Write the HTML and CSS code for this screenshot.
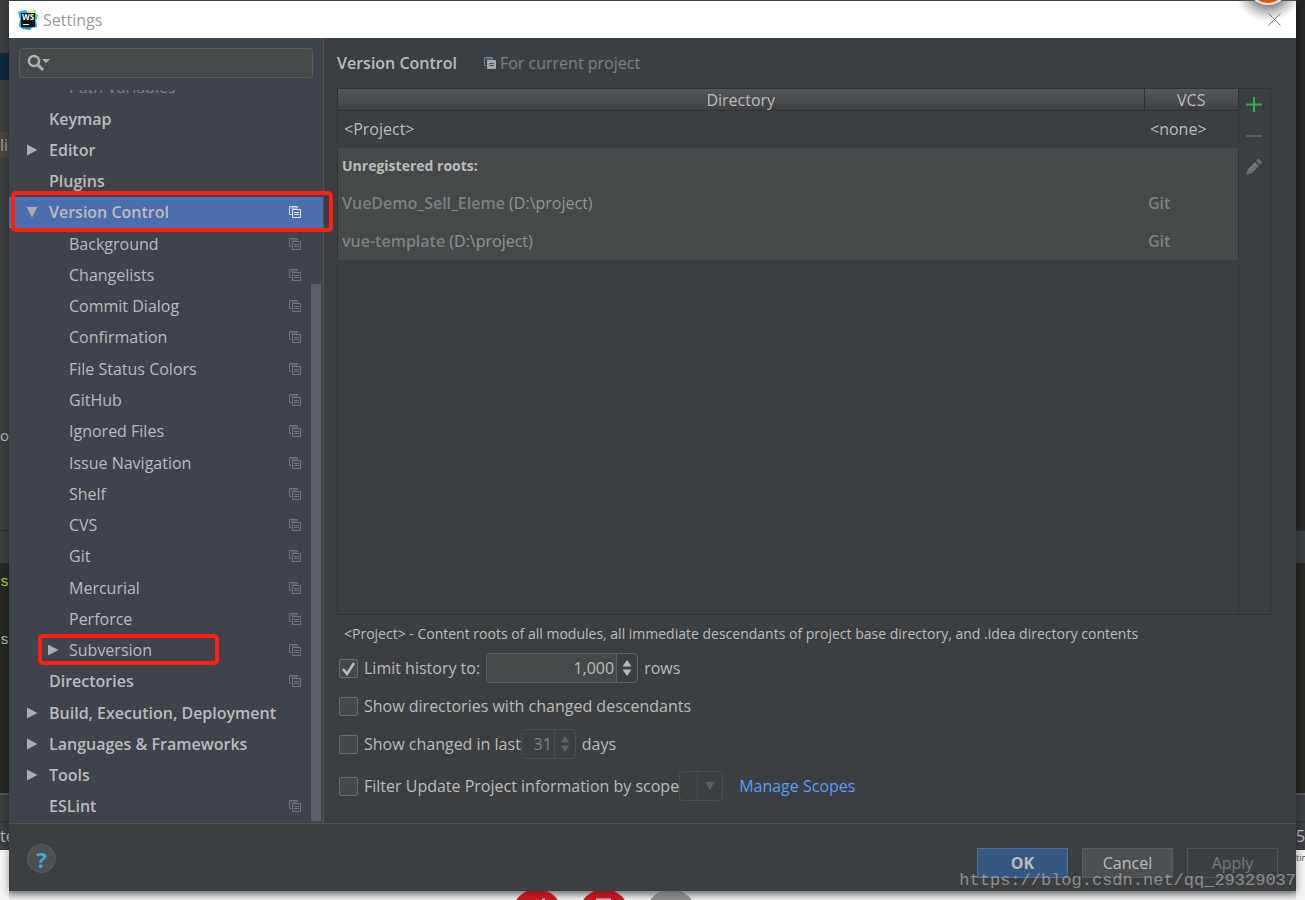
FILE: index.html
```html
<!DOCTYPE html>
<html lang="en">
<head>
<meta charset="utf-8">
<title>Settings</title>
<link rel="stylesheet" href="styles.css">
</head>
<body>
<svg class="defs" aria-hidden="true">
  <symbol id="copy" viewBox="0 0 12 12"><path d="M2.500 8.500H.5V.5h8V2M2 2h6" fill="none" stroke="var(--back)"/><path d="M3.500 3.500h8v8h-8z" fill="var(--front, none)" stroke="currentColor"/><path d="M5 6.500h5M5 8.500h5" fill="none" stroke="var(--lines, currentColor)"/></symbol>
  <symbol id="right" viewBox="0 0 12 12"><path d="M1 .5 11.500 6 1 11.500z" fill="currentColor"/></symbol>
  <symbol id="down" viewBox="0 0 12 12"><path d="M.5 1h11L6 11.500z" fill="currentColor"/></symbol>
  <symbol id="spin" viewBox="0 0 10 18"><path d="M5 1l4.500 6.500H.5zM.5 10.500h9L5 17z" fill="currentColor"/></symbol>
</svg>
<div class="desktop">
  <div class="strip left">
    <div class="s1"></div><div class="s2"></div><div class="s3"></div>
    <div class="s4">li</div>
    <div class="s5"><span>or</span></div>
    <div class="s6"></div>
    <div class="code"><span class="green">:s</span><span>s</span></div>
    <div class="s8"></div>
    <div class="status">te</div>
    <div class="page"></div>
  </div>
  <div class="dialog">
    <header class="titlebar">
      <svg class="logo" viewBox="0 0 20 20"><path d="M0 2 7 0l3 2 7-2 1 4 2 1-2 5 1 7-5 1-2 2-8-1-3-3L2 9z" fill="#12b5e6"/><path d="M9 2 16 0l2 4-7-1z" fill="#f3ec4c"/><path d="M2 12 4 18l8 1 2-2z" fill="#087fbc"/><path d="M15 5h4l-1 7-3 2z" fill="#21d7c4"/><path d="M3 3h14v14H3z" fill="#101010"/><path d="M5 14.500h6" stroke="#fff"/><text x="4" y="10">WS</text></svg>
      <h1>Settings</h1>
      <button class="close" aria-label="Close"><svg viewBox="0 0 13 13"><path d="M.5.5l12 12M12.500.5l-12 12" stroke="#777" fill="none"/></svg></button>
    </header>
    <div class="content">
      <aside class="sidebar">
        <label class="search">
          <svg viewBox="0 0 24 18"><circle cx="7" cy="7" r="5" fill="none" stroke="#afb1b3" stroke-width="2.500"/><path d="M11 11l5 5" stroke="#afb1b3" stroke-width="3"/><path d="M15 5h8l-4 4z" fill="#afb1b3"/></svg>
          <input type="text" aria-label="Search settings">
        </label>
        <div class="treewrap">
        <ul class="tree">
          <li class="cut sub">Path Variables</li>
          <li class="top">Keymap</li>
          <li class="top"><button aria-label="Expand"><svg><use href="#right"/></svg></button>Editor</li>
          <li class="top">Plugins</li>
          <li class="top selected"><button aria-label="Collapse"><svg><use href="#down"/></svg></button>Version Control<svg class="copy"><use href="#copy"/></svg><i class="mark wide"></i></li>
          <li class="sub">Background<svg class="copy"><use href="#copy"/></svg></li>
          <li class="sub">Changelists<svg class="copy"><use href="#copy"/></svg></li>
          <li class="sub">Commit Dialog<svg class="copy"><use href="#copy"/></svg></li>
          <li class="sub">Confirmation<svg class="copy"><use href="#copy"/></svg></li>
          <li class="sub">File Status Colors<svg class="copy"><use href="#copy"/></svg></li>
          <li class="sub">GitHub<svg class="copy"><use href="#copy"/></svg></li>
          <li class="sub">Ignored Files<svg class="copy"><use href="#copy"/></svg></li>
          <li class="sub">Issue Navigation<svg class="copy"><use href="#copy"/></svg></li>
          <li class="sub">Shelf<svg class="copy"><use href="#copy"/></svg></li>
          <li class="sub">CVS<svg class="copy"><use href="#copy"/></svg></li>
          <li class="sub">Git<svg class="copy"><use href="#copy"/></svg></li>
          <li class="sub">Mercurial<svg class="copy"><use href="#copy"/></svg></li>
          <li class="sub">Perforce<svg class="copy"><use href="#copy"/></svg></li>
          <li class="sub"><button aria-label="Expand"><svg><use href="#right"/></svg></button>Subversion<svg class="copy"><use href="#copy"/></svg><i class="mark narrow"></i></li>
          <li class="top">Directories<svg class="copy"><use href="#copy"/></svg></li>
          <li class="top"><button aria-label="Expand"><svg><use href="#right"/></svg></button>Build, Execution, Deployment</li>
          <li class="top"><button aria-label="Expand"><svg><use href="#right"/></svg></button>Languages &amp; Frameworks</li>
          <li class="top"><button aria-label="Expand"><svg><use href="#right"/></svg></button>Tools</li>
          <li class="top">ESLint<svg class="copy"><use href="#copy"/></svg></li>
        </ul>
        <div class="scrollbar"></div>
        </div>
      </aside>
      <main>
        <div class="heading"><h2>Version Control</h2><svg class="copy"><use href="#copy"/></svg><span>For current project</span></div>
        <div class="panel">
          <div class="tablebox">
            <table>
              <colgroup><col><col class="vcs"></colgroup>
              <thead><tr><th>Directory</th><th>VCS</th></tr></thead>
              <tbody>
                <tr class="project"><td>&lt;Project&gt;</td><td>&lt;none&gt;</td></tr>
                <tr class="root label"><td colspan="2">Unregistered roots:</td></tr>
                <tr class="root"><td><b>VueDemo_Sell_Eleme</b> (D:\project)</td><td><b>Git</b></td></tr>
                <tr class="root"><td><b>vue-template</b> (D:\project)</td><td><b>Git</b></td></tr>
              </tbody>
            </table>
          </div>
          <div class="tools">
            <button aria-label="Add"><svg viewBox="0 0 16 16"><path d="M8 0v15M0 7.500h16" stroke="#2fae52" stroke-width="2"/></svg></button>
            <button aria-label="Remove" disabled><svg viewBox="0 0 16 16"><path d="M0 8h16" stroke="#5b5d5f" stroke-width="2"/></svg></button>
            <button aria-label="Edit" disabled><svg viewBox="0 0 16 16"><path d="M0 16 2 10 9 3l4 4-7 7z" fill="#6b6d6f"/><path d="M10 2l2-2h1l3 3v1l-2 2z" fill="#66686a"/><path d="M3 11l7-7" stroke="#808284"/></svg></button>
          </div>
        </div>
        <p class="note">&lt;Project&gt; - Content roots of all modules, all immediate descendants of project base directory, and .idea directory contents</p>
        <div class="options">
          <div class="option"><input type="checkbox" id="limit" checked><label for="limit">Limit history to:</label><span class="spinner"><input type="text" value="1,000" aria-label="History rows"><button aria-label="Change rows"><svg><use href="#spin"/></svg></button></span><span>rows</span></div>
          <div class="option"><input type="checkbox" id="dirs"><label for="dirs">Show directories with changed descendants</label></div>
          <div class="option tight"><input type="checkbox" id="last"><label for="last">Show changed in last</label><span class="spinner small"><input type="text" value="31" aria-label="Days" disabled><button aria-label="Change days" disabled><svg><use href="#spin"/></svg></button></span><span>days</span></div>
          <div class="option tight"><input type="checkbox" id="filter"><label for="filter">Filter Update Project information by scope</label><span class="combo"><select aria-label="Scope" disabled><option></option></select><svg><use href="#down"/></svg></span><a href="#">Manage Scopes</a></div>
        </div>
      </main>
    </div>
    <footer class="actions">
      <button class="help" aria-label="Help">?</button>
      <button class="primary">OK</button><button>Cancel</button><button disabled>Apply</button>
    </footer>
  </div>
  <div class="strip right">
    <div class="dark"></div><div class="s6"></div><div class="code"></div><div class="s8"></div>
    <div class="status">5</div>
    <div class="page">tin</div>
  </div>
  <div class="dock">
    <svg viewBox="0 0 180 9"><g fill="#c41a22"><circle cx="23" cy="23" r="25"/><circle cx="90" cy="23" r="25"/></g><circle cx="157" cy="23" r="25" fill="#8d8d8d"/><path d="M82 8.500h15M28 8.500h3" stroke="#f0b5b7" stroke-width="2"/></svg>
  </div>
</div>
<svg class="badge" viewBox="0 0 70 24"><defs><radialGradient id="halo"><stop offset=".5" stop-color="#555" stop-opacity=".7"/><stop offset="1" stop-color="#888" stop-opacity="0"/></radialGradient></defs><circle cx="35" cy="-12" r="34" fill="url(#halo)"/><circle cx="35" cy="-16" r="21" fill="#e5e5e5"/><circle cx="35" cy="-16" r="19" fill="#d95508"/></svg>
<div class="watermark">https://blog.csdn.net/qq_29329037</div>
</body>
</html>
```
FILE: styles.css
```css
* { box-sizing: border-box; }
body { margin: 0; background: #f4f4f4; color: #bbb; font: 16px/20px "Open Sans", "Noto Sans", sans-serif; overflow: hidden; }
button { margin: 0; padding: 0; border: 0; background: none; color: inherit; font: inherit; }
.defs { display: none; }
.desktop { display: grid; grid-template-columns: 9px minmax(0, 1fr) 9px; grid-template-rows: minmax(0, 1fr) 9px; height: 100vh; }
.strip { grid-row: 1 / 3; display: flex; flex-direction: column; overflow: hidden; background: #3c3f41; }
.strip.left { grid-column: 1; }
.strip.right { grid-column: 3; }
.s1 { height: 53px; }
.s2 { height: 27px; background: #0d293e; }
.s3 { height: 52px; }
.s4 { height: 26px; background: #4b463c; line-height: 26px; color: #a0a0a0; }
.s5 { flex: 1; padding-top: 267px; font-size: 15px; }
.s6 { height: 33px; border-top: 1px solid #2c2c2c; background: #3c3f41; }
.code { display: flex; flex-direction: column; align-items: flex-end; height: 230px; padding-top: 10px; gap: 38px; background: #272822; font: 15px/20px "Liberation Mono", monospace; }
.green { color: #a6e22e; }
.s8 { height: 29px; border-top: 2px solid #515355; border-bottom: 1px solid #323232; }
.status { height: 28px; line-height: 28px; }
.page { height: 50px; background: #f4f4f4; color: #444; font-size: 9px; line-height: 16px; }
.dark { flex: 1; background: #262728; }
.dialog { position: relative; grid-column: 2; grid-row: 1; display: flex; flex-direction: column; min-height: 0; border-top: 1px solid #404040; background: #3c3f41; box-shadow: 0 1px 8px #0006; }
.titlebar { display: flex; align-items: center; height: 37px; padding: 0 15px 0 9px; background: #fff; }
.logo { width: 20px; height: 20px; margin-right: 5px; }
.logo text { fill: #fff; font: bold 8px "Open Sans", sans-serif; }
h1 { margin: 0; font-size: 16px; font-weight: 400; color: #999; }
.close { margin-left: auto; height: 13px; }
.close svg { display: block; width: 13px; height: 13px; }
.content { flex: 1; display: flex; min-height: 0; border-bottom: 1px solid #515355; }
.sidebar { display: flex; flex-direction: column; flex: 0 0 315px; gap: 12px; padding-top: 10px; border-right: 1px solid #515355; background: #3f434c; }
.search { display: flex; align-items: center; flex: 0 0 30px; margin: 0 10px; padding-left: 7px; border: 1px solid #5a5d5d; border-radius: 3px; background: #45494a; }
.search svg { width: 24px; height: 18px; }
.search input { flex: 1; min-width: 0; border: 0; background: none; color: #bbb; }
.treewrap { flex: 1; position: relative; min-height: 0; padding-bottom: 1px; }
.tree { display: flex; flex-direction: column; height: 100%; margin: 0; padding: 0; list-style: none; }
.tree li { position: relative; flex: 1; display: flex; align-items: center; min-height: 0; padding-right: 22px; --back: #687684; }
.tree .top { padding-left: 40px; font-weight: 600; }
.tree .sub { padding-left: 60px; }
.tree .cut { flex: 0 0 13px; overflow: hidden; align-items: flex-end; line-height: 31px; color: #7d8084; }
.tree .selected { background: #4b6eaf; --back: #d5dceb; }
.tree button { width: 12px; height: 12px; color: #adadad; }
.tree button svg { display: block; width: 12px; height: 12px; }
.tree .top button { margin: 0 11px 0 -23px; }
.tree .sub button { margin: 0 10px 0 -22px; }
.copy { width: 12px; height: 12px; color: #777; }
.tree .copy { margin-left: auto; }
.selected .copy { color: #e8e8e8; }
.mark { position: absolute; z-index: 2; border: 4px solid #ff2012; border-radius: 5px; }
.wide { inset: -6px -10px -4px 2px; }
.narrow { inset: -1px 104px 1px 29px; }
.scrollbar { position: absolute; right: 2px; top: 194px; bottom: 2px; width: 10px; background: #5d6069; }
main { flex: 1; display: flex; flex-direction: column; min-width: 0; padding: 0 25px 22px 13px; }
.heading { display: flex; align-items: center; height: 50px; color: #808080; }
h2 { margin: 0 27px 0 0; font-size: 16px; font-weight: 600; color: #bbb; }
.heading .copy { margin-right: 4px; color: #aaa; --back: #5d8eaa; --front: #aaa; --lines: #555; }
.panel { flex: 1; display: flex; min-height: 0; border: 1px solid #323232; }
.tablebox { flex: 1; }
table { width: 100%; border-collapse: collapse; table-layout: fixed; }
.vcs { width: 94px; }
th, td { padding: 0; }
th { height: 21px; padding-top: 1px; border-bottom: 1px solid #2f3132; background: linear-gradient(#54575a, #3e4042); font-weight: 400; line-height: 20px; }
th + th { border-left: 1px solid #2f3132; }
td { height: 37px; padding-left: 4px; text-align: left; }
.project td { padding-left: 6px; }
tr:last-child td { height: 38px; }
.root { background: #45494a; color: #949494; }
.root b { font-weight: 600; color: #808080; }
.label td { color: #bbb; font-size: 14px; font-weight: 700; }
.tools { display: flex; flex-direction: column; align-items: center; gap: 15px; width: 32px; padding: 8px 2px 0 0; border-left: 1px solid #323232; }
.tools button, .tools svg { display: block; width: 16px; height: 16px; }
.note { margin: 9px 0 9px 7px; font-size: 14px; white-space: nowrap; }
.options { display: flex; flex-direction: column; gap: 8px; padding-left: 2px; }
.option { display: flex; align-items: center; min-height: 30px; gap: 6px; }
.option:last-child { margin-top: 4px; }
.option.tight { gap: 0; }
.tight label { margin-left: 6px; }
.option > input { appearance: none; width: 19px; height: 19px; margin: 0; border: 1px solid #6b6b6b; border-radius: 2px; background: #43494a; }
.option > input:checked { background: #43494a url("data:image/svg+xml,%3Csvg xmlns='http://www.w3.org/2000/svg' viewBox='0 0 17 17'%3E%3Cpath d='M3 9l4 5 7-11' fill='none' stroke='%23bbb' stroke-width='2.500'/%3E%3C/svg%3E"); }
.spinner { display: flex; width: 152px; height: 30px; border: 1px solid #5e6060; border-radius: 4px; overflow: hidden; }
.spinner input { flex: 1; min-width: 0; padding: 0 2px; border: 0; background: #45494a; color: #bbb; font: inherit; text-align: right; }
.spinner button { display: grid; place-items: center; width: 21px; border-left: 1px solid #5e6060; }
.spinner svg { width: 10px; height: 18px; color: #bbb; }
.small { width: 55px; border-color: #4c4f51; }
.small input { background: none; color: #808080; }
.small button { border-color: #4c4f51; }
.small svg { color: #5c5e60; }
.small + span { margin-left: 6px; }
.combo { display: flex; align-items: center; position: relative; width: 44px; height: 30px; border: 1px solid #4c4f51; border-radius: 4px; }
.combo select { appearance: none; width: 18px; height: 100%; padding: 0; border: 0; border-right: 1px solid #4c4f51; background: none; }
.combo svg { width: 10px; height: 10px; margin-left: 7px; color: #5c5e60; }
a { margin-left: 16px; color: #589df6; text-decoration: none; }
.actions { display: flex; align-items: center; gap: 14px; height: 67px; padding: 10px 18px 0; }
.actions button { width: 91px; height: 30px; border: 1px solid #5a5d5f; background: #4c5052; }
.actions .help { width: 29px; height: 29px; margin: 0 auto 8px 0; border-radius: 50%; color: #4fa5d5; font-size: 22px; font-weight: 700; line-height: 26px; }
.actions .primary { border-color: #4a6f9c; background: #365880; font-weight: 700; }
.actions button:disabled { border-color: #515355; background: none; color: #777; }
.dock { grid-column: 2; grid-row: 2; overflow: hidden; background: linear-gradient(#aaa, #f0f0f0); padding-left: 505px; }
.dock svg { display: block; width: 180px; height: 9px; }
.badge { position: absolute; top: 0; right: 2px; width: 70px; height: 24px; }
.watermark { position: absolute; right: 9px; bottom: 7px; color: #a0a0a0; font: 17px/24px "Liberation Mono", monospace; opacity: .8; }
```
